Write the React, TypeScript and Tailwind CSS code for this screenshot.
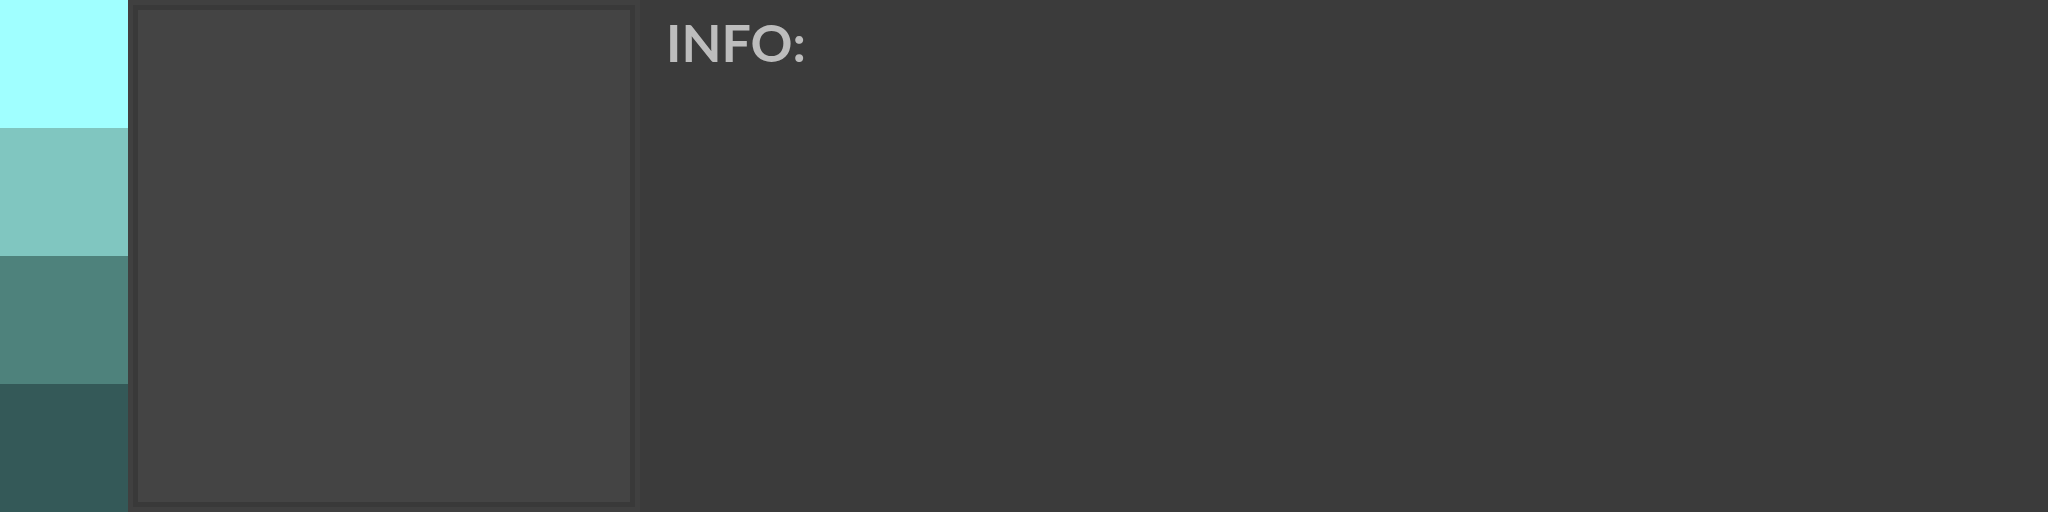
export default function App() {
  return (
    <div className="flex h-[512px] w-[2048px] bg-[#3b3b3b]">
      <div className="flex w-[128px] flex-col">
        <div className="h-[128px] bg-[#a0ffff]" />
        <div className="h-[128px] bg-[#80c6c0]" />
        <div className="h-[128px] bg-[#4e827c]" />
        <div className="h-[128px] bg-[#345958]" />
      </div>
      <div className="h-[512px] w-[512px] bg-[#404040] p-[5px]">
        <div className="h-full w-full border-[5px] border-[#393939] bg-[#444444]" />
      </div>
      <div className="flex-1 pl-[26px] pt-[11px]">
        <div
          className="text-[52px] font-bold leading-[62px] text-[#bdbdbd]"
          style={{ fontFamily: 'Lato, sans-serif' }}
        >
          INFO:
        </div>
      </div>
    </div>
  );
}
